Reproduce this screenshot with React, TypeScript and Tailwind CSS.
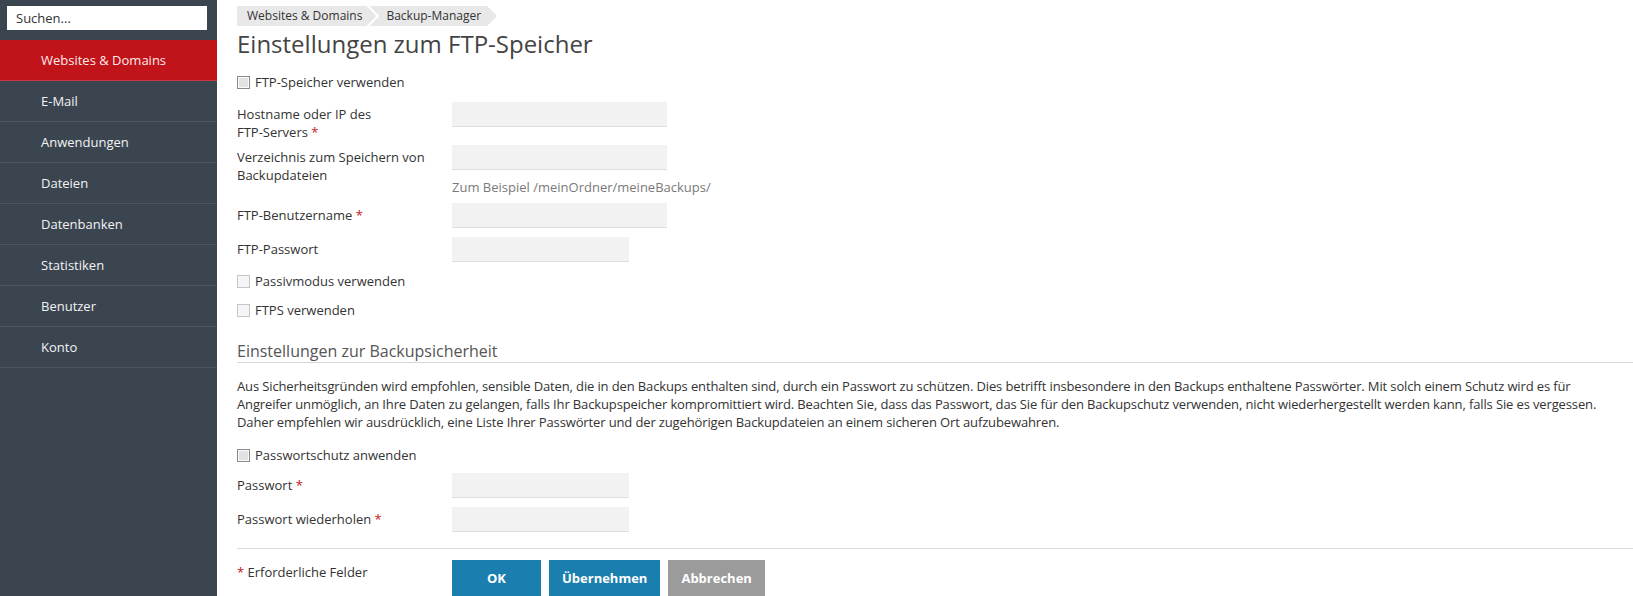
import type { ReactNode } from "react";

const navItems = [
  "Websites & Domains",
  "E-Mail",
  "Anwendungen",
  "Dateien",
  "Datenbanken",
  "Statistiken",
  "Benutzer",
  "Konto",
];

function Req() {
  return <span className="text-[#c4161c]"> *</span>;
}

function Checkbox({ disabled }: { disabled?: boolean }) {
  return (
    <span
      className={
        disabled
          ? "box-border inline-block h-[13px] w-[13px] shrink-0 border border-[#c6c6c6] bg-[#f5f5f5]"
          : "box-border inline-block h-[13px] w-[13px] shrink-0 border border-[#8a8a8a] bg-[#e2e2e2] shadow-[inset_0_0_0_1px_#fbfbfb]"
      }
    />
  );
}

function CheckRow({ label, disabled, className }: { label: string; disabled?: boolean; className?: string }) {
  return (
    <div className={`flex h-[20px] items-center gap-[5px] ${className ?? ""}`}>
      <Checkbox disabled={disabled} />
      <span>{label}</span>
    </div>
  );
}

function Field({
  label,
  required,
  narrow,
  hint,
  className,
}: {
  label: ReactNode;
  required?: boolean;
  narrow?: boolean;
  hint?: string;
  className?: string;
}) {
  return (
    <div className={`flex ${className ?? ""}`}>
      <div className="w-[215px] shrink-0 pr-[15px] pt-[3px]">
        {label}
        {required && <Req />}
      </div>
      <div>
        <div
          className={`box-border h-[25px] border-b border-[#dedede] bg-[#f2f2f2] ${narrow ? "w-[177px]" : "w-[215px]"}`}
        />
        {hint && <div className="mt-[8px] text-[#7a7a7a]">{hint}</div>}
      </div>
    </div>
  );
}

function Sidebar() {
  return (
    <aside className="w-[217px] shrink-0 bg-[#3b4550]">
      <div className="px-[7px] pt-[6px]">
        <div className="flex h-[24px] w-[200px] items-center bg-white pl-[9px] text-[13px] text-[#333]">
          Suchen...
        </div>
      </div>
      <nav className="mt-[10px]">
        {navItems.map((item, i) => (
          <div
            key={item}
            className={
              i === 0
                ? "box-border flex h-[41px] items-center border-b border-[#c63a3f] bg-[#c0141a] pl-[41px] text-[#fbeaea]"
                : "box-border flex h-[41px] items-center border-b border-[#4c5660] pl-[41px] text-[#f2f3f4]"
            }
          >
            {item}
          </div>
        ))}
      </nav>
    </aside>
  );
}

function Breadcrumbs() {
  return (
    <div className="mt-[6px] flex h-[20px] text-[12px] leading-[20px] text-[#333]">
      <div className="bg-[#e8e8e8] pl-[10px] pr-[14px] [clip-path:polygon(0_0,calc(100%_-_10px)_0,100%_50%,calc(100%_-_10px)_100%,0_100%)]">
        Websites &amp; Domains
      </div>
      <div className="-ml-[7px] bg-[#e8e8e8] pl-[17px] pr-[16px] [clip-path:polygon(0_0,calc(100%_-_10px)_0,100%_50%,calc(100%_-_10px)_100%,0_100%,10px_50%)]">
        Backup-Manager
      </div>
    </div>
  );
}

export default function App() {
  return (
    <div className="flex min-h-screen w-full font-['Open_Sans',sans-serif] text-[13px] leading-[18px] text-[#333]">
      <Sidebar />
      <main className="flex min-w-0 flex-1 flex-col pl-[20px]">
        <Breadcrumbs />
        <h1 className="mt-[2px] text-[24px] font-normal leading-[32px] text-[#444]">
          Einstellungen zum FTP-Speicher
        </h1>

        <CheckRow label="FTP-Speicher verwenden" className="mt-[12px]" />

        <Field
          label={
            <>
              Hostname oder IP des <span className="whitespace-nowrap">FTP-Servers</span>
            </>
          }
          required
          className="mt-[10px]"
        />
        <Field
          label="Verzeichnis zum Speichern von Backupdateien"
          hint="Zum Beispiel /meinOrdner/meineBackups/"
          className="mt-[4px]"
        />
        <Field label="FTP-Benutzername" required className="mt-[7px]" />
        <Field label="FTP-Passwort" narrow className="mt-[9px]" />

        <CheckRow label="Passivmodus verwenden" disabled className="mt-[9px]" />
        <CheckRow label="FTPS verwenden" disabled className="mt-[9px]" />

        <h2 className="mt-[20px] border-b border-[#d6d6d6] text-[16px] font-normal leading-[22px] text-[#555]">
          Einstellungen zur Backupsicherheit
        </h2>
        <p className="mt-[14px] pr-[8px] tracking-[-0.13px]">
          Aus Sicherheitsgründen wird empfohlen, sensible Daten, die in den Backups enthalten sind, durch ein Passwort zu
          schützen. Dies betrifft insbesondere in den Backups enthaltene Passwörter. Mit solch einem Schutz wird es für
          Angreifer unmöglich, an Ihre Daten zu gelangen, falls Ihr Backupspeicher kompromittiert wird. Beachten Sie, dass
          das Passwort, das Sie für den Backupschutz verwenden, nicht wiederhergestellt werden kann, falls Sie es vergessen.
          Daher empfehlen wir ausdrücklich, eine Liste Ihrer Passwörter und der zugehörigen Backupdateien an einem sicheren
          Ort aufzubewahren.
        </p>

        <CheckRow label="Passwortschutz anwenden" className="mt-[14px]" />
        <Field label="Passwort" required narrow className="mt-[8px]" />
        <Field label="Passwort wiederholen" required narrow className="mt-[9px]" />

        <div className="mt-[16px] flex border-t border-[#dadada] pt-[11px]">
          <div className="w-[215px] shrink-0 pt-[3px]">
            <span className="text-[#c4161c]">*</span> Erforderliche Felder
          </div>
          <div className="flex gap-[8px]">
            <button className="h-[36px] min-w-[89px] bg-[#1a7eaf] px-[13px] font-bold text-white">OK</button>
            <button className="h-[36px] min-w-[89px] bg-[#1a7eaf] px-[13px] font-bold text-white">Übernehmen</button>
            <button className="h-[36px] min-w-[89px] bg-[#9b9b9b] px-[13px] font-bold text-white">Abbrechen</button>
          </div>
        </div>
      </main>
    </div>
  );
}
